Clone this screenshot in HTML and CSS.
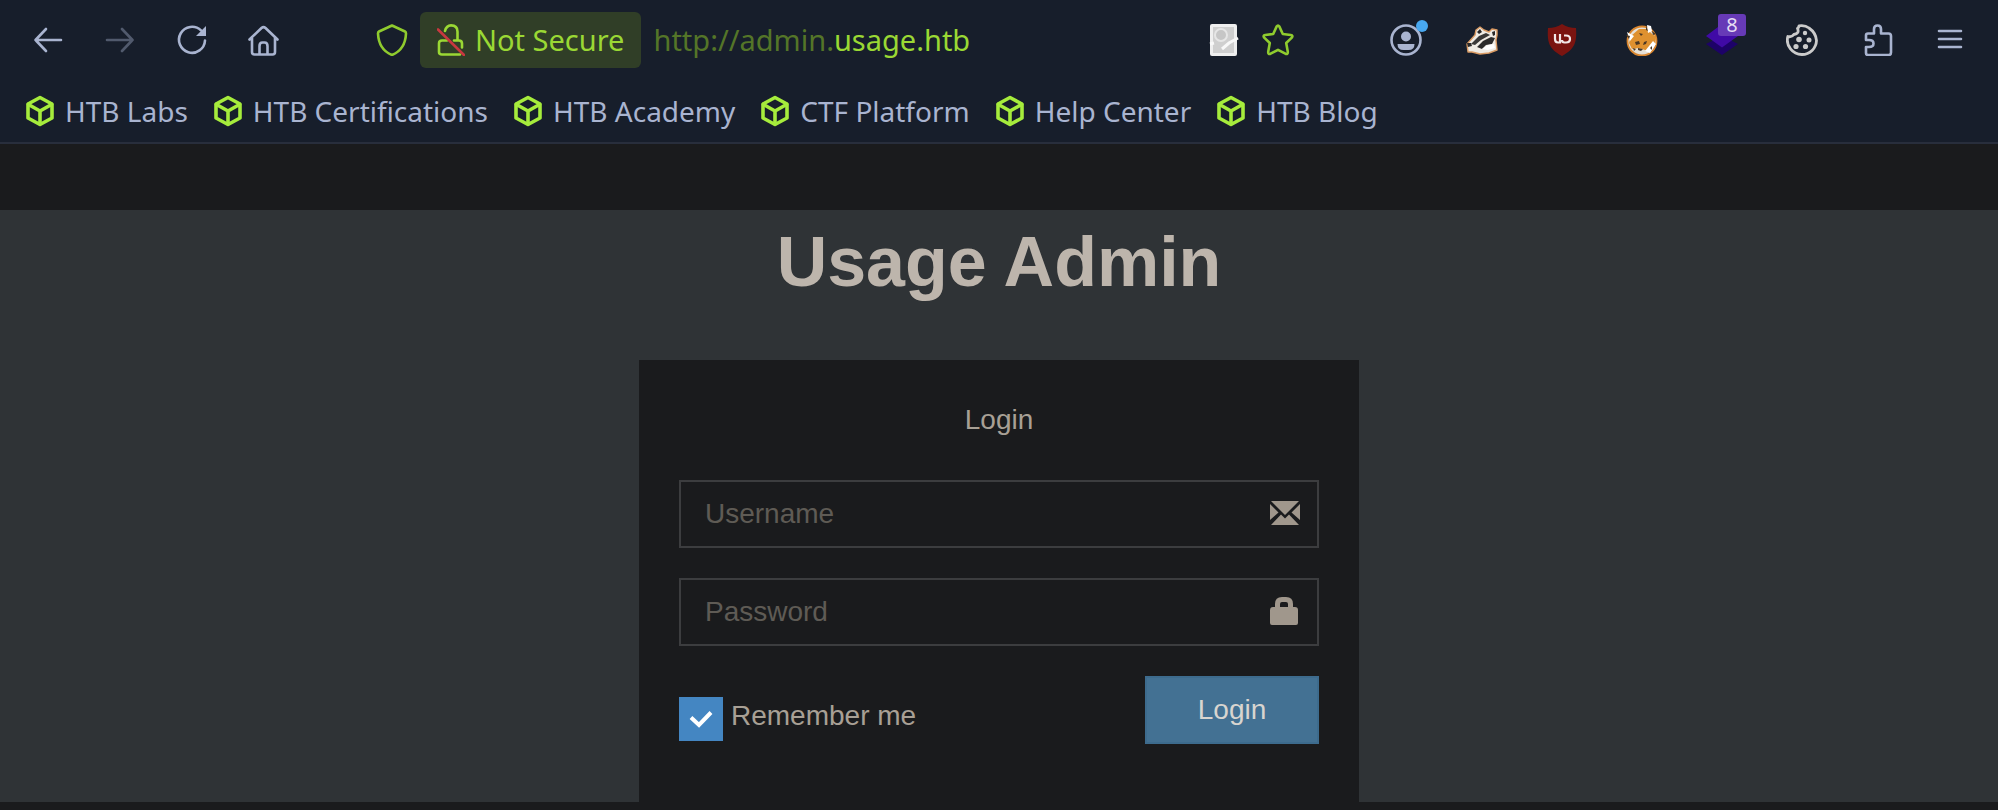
FILE: index.html
```html
<!DOCTYPE html>
<html lang="en">
<head>
<meta charset="utf-8">
<title>Usage Admin | Login</title>
<link rel="stylesheet" href="styles.css">
</head>
<body>
<svg class="defs" aria-hidden="true">
  <symbol id="cube" viewBox="0 0 32 32">
    <g fill="none" stroke="currentColor" stroke-width="3.6" stroke-linejoin="round" stroke-linecap="round">
      <path d="M16 2.500 28 9v14L16 29.500 4 23V9z"/>
      <path d="M4.500 9.500 16 16l11.500-6.500M16 16v13"/>
    </g>
  </symbol>
</svg>

<header class="browser">
  <div class="toolbar">
    <nav class="nav-buttons" aria-label="Navigation">
      <button class="icon-btn" aria-label="Back">
        <svg viewBox="0 0 32 32" class="line"><path d="M29 16H3.500M14 5 3.500 16 14 27"/></svg>
      </button>
      <button class="icon-btn faded" aria-label="Forward">
        <svg viewBox="0 0 32 32" class="line"><path d="M3 16h25.500M18 5 28.500 16 18 27"/></svg>
      </button>
      <button class="icon-btn" aria-label="Reload">
        <svg viewBox="0 0 32 32" class="line"><path d="M29 16.500A13 13 0 1 1 25 6.400"/><path d="M30 2v10H20z" fill="currentColor" stroke="none"/></svg>
      </button>
      <button class="icon-btn" aria-label="Home">
        <svg viewBox="0 0 32 32" class="line"><path d="M1.500 15.500 13.500 4q2-1.800 4 0l12 11.500M4 14v14q0 2.500 2.500 2.500h18q2.500 0 2.500-2.500V14M11.500 30v-8q0-3.500 3-3.500h2q3 0 3 3.500v8"/></svg>
      </button>
    </nav>

    <div class="urlbar">
      <button class="icon-btn green" aria-label="Tracking protection">
        <svg viewBox="0 0 32 32" class="line"><path d="M16 1.500 29 7.500q1 .500 1 2C29.500 20 26 27 16 31 6 27 2.500 20 2 9.500q0-1.500 1-2z"/></svg>
      </button>
      <button class="identity">
        <svg viewBox="0 0 28 32" class="line"><path d="M8 7C9 3 11 1.400 14 1.400q6.500 0 6.500 6.300v8.500M10 16.500H5q-3 0-3 3V28q0 2.500 3 2.500h18M17 16.500h5q3 0 3 3v4"/><path d="M1 5.500 27 31" stroke="#c8383f"/></svg>
        <span>Not Secure</span>
      </button>
      <div class="address" role="textbox" aria-label="Address">http://admin.<b>usage.htb</b></div>
      <div class="page-actions">
        <button class="icon-btn" aria-label="Reader image">
          <svg viewBox="0 0 32 32"><rect x="2" y="0" width="27" height="32" rx="2" fill="#efefef"/><rect x="5" y="3" width="21" height="26" fill="#cfcfcf"/><circle cx="13" cy="11" r="6" fill="#c6c6c6" stroke="#e6e6e6" stroke-width="2"/><path d="m14 25 7-6 9-5M2 20l4-1" fill="none" stroke="#f8f8f8" stroke-width="3"/></svg>
        </button>
        <button class="icon-btn green" aria-label="Bookmark this page">
          <svg viewBox="0 0 32 32" class="line"><path d="M14.600 2.600q1.400-2 2.800 0l3.400 7.400 8 1q2.600.500 1 2.600L24.200 19l1.600 8.800q.200 2.800-2.400 1.900L16 25.800l-7.400 3.900q-2.600.900-2.400-1.900L7.800 19l-5.600-5.400q-1.600-2.100 1-2.600l8-1z"/></svg>
        </button>
      </div>
    </div>

    <div class="extensions">
      <button class="icon-btn account" aria-label="Account">
        <svg viewBox="0 0 32 32"><circle cx="16" cy="16" r="14.500" fill="none" stroke="currentColor" stroke-width="2.600"/><circle cx="16" cy="12.500" r="5" fill="currentColor"/><path d="M7.500 20h17q0 6-6 6h-5q-6 0-6-6z" fill="currentColor"/></svg>
        <span class="dot"></span>
      </button>
      <div class="addons">
        <button class="icon-btn" aria-label="Privacy Badger">
          <svg viewBox="0 0 32 32"><path d="m1 20 8-9 1-5 4-3 4 3 5 2 3-3 5 1v5l-1 5 1 10-8 3-9 1-8-2-4 0z" fill="#efebe4" stroke="#d99a63" stroke-width="1.400" stroke-linejoin="round"/><path d="m5 20 8-8 7-3 4 2-9 5-6 5z" fill="#393837"/><path d="m11 23 6-6 8-4 4 1-3 6-6 1-4 4z" fill="#2c2b2b"/><path d="m16 25 6-4 6-1 1 4-7 2z" fill="#fff"/><path d="m11 8 3-3 2 3-3 2zM26 8l3-1v4l-2 1zM1 19l4 0 1 3-4 1z" fill="#292828"/></svg>
        </button>
        <button class="icon-btn" aria-label="uBlock Origin">
          <svg viewBox="0 0 32 32"><path d="M16 0q6 4 14 4c1 14-1 21-14 28C3 25 1 18 2 4q8 0 14-4z" fill="#7a1410"/><path d="M9 10v5q0 3.500 3 3.500h2V10M18 11.500h2q4 0 4 3.500t-4 3.500h-1.500q-2.500 0-2.500-2.500" fill="none" stroke="#f2e8e8" stroke-width="2.200"/></svg>
        </button>
        <button class="icon-btn" aria-label="FoxyProxy">
          <svg viewBox="0 0 32 32"><circle cx="16" cy="17" r="14.500" fill="#e6e0d6" stroke="#d9862f" stroke-width="1.800"/><path d="m5 12 8-7 8 0 4 4 5 4-1 6-7 8-9-3-7 1-3-6z" fill="#df912f"/><path d="m1 8 7 4-4 5zM21 1l4 1 1 5-4 2zM19 27l8-10 3 3-6 9z" fill="#fff"/><path d="m0 11 4 1-1 3zM20 1l2 6-2-1zM9 18l4-1 1 3-4 1zM18 18l3-1-1 3-3 1zM12 24l5 1-2 2-3-1zM7 24l3 1-2 2zM26 7l4 3-3 1zM13 9l4 1-2 2zM24 24l2-2v4z" fill="#4b3825"/></svg>
        </button>
        <button class="icon-btn" aria-label="Wappalyzer, 8 found">
          <svg viewBox="0 0 32 32"><path d="m0 20 16-8 16 8-16 11z" fill="#1d0268"/><path d="M0 12 16 0l16 12-16 11.500z" fill="#400aa6"/></svg>
          <span class="badge">8</span>
        </button>
        <button class="icon-btn" aria-label="Cookie Editor">
          <svg viewBox="0 0 32 32"><path d="M13 1.800q6-1 10 2.200 7 5 7.500 12.500A14.500 14.500 0 0 1 16 30.500 14.500 14.500 0 0 1 1.800 12.500q4 1 6-2 6-1 3.700-6 1.500-1 1.500-2.700z" fill="none" stroke="#cbcbcb" stroke-width="2.800" stroke-linejoin="round"/><g fill="#cbcbcb"><circle cx="19" cy="9" r="2.200"/><circle cx="13" cy="15.500" r="2.800"/><circle cx="23" cy="16" r="2.500"/><circle cx="10" cy="22.500" r="2.600"/><circle cx="19.500" cy="22.500" r="2.600"/></g></svg>
        </button>
      </div>
      <button class="icon-btn" aria-label="Extensions">
        <svg viewBox="0 0 32 32" class="line"><path d="M12 9.500V5q0-3.500 3.500-3.500T19 5v4.500h7.500q2.500 0 2.500 2.500V28.500q0 2.500-2.500 2.500H6q-2 0-2-2v-6h3q4.500 0 4.500-3.500T7 16H4v-4.500q0-2 2-2z"/></svg>
      </button>
      <button class="icon-btn menu" aria-label="Menu">
        <svg viewBox="0 0 32 32" class="line"><path d="M5 7h22M5 15h22M5 23h22"/></svg>
      </button>
    </div>
  </div>

  <nav class="bookmarks" aria-label="Bookmarks">
    <a href="#"><svg><use href="#cube"/></svg>HTB Labs</a>
    <a href="#"><svg><use href="#cube"/></svg>HTB Certifications</a>
    <a href="#"><svg><use href="#cube"/></svg>HTB Academy</a>
    <a href="#"><svg><use href="#cube"/></svg>CTF Platform</a>
    <a href="#"><svg><use href="#cube"/></svg>Help Center</a>
    <a href="#"><svg><use href="#cube"/></svg>HTB Blog</a>
  </nav>
</header>

<main class="page">
  <h1>Usage Admin</h1>
  <form class="card">
    <p class="card-title">Login</p>
    <div class="field">
      <input type="text" placeholder="Username" aria-label="Username">
      <svg viewBox="0 0 32 32"><path d="M2 4h28L16 18zM1 7l8.500 8.500L1 23zM31 7l-8.500 8.500L31 23zM2 28l10-10.500 4 4 4-4L30 28z"/></svg>
    </div>
    <div class="field">
      <input type="password" placeholder="Password" aria-label="Password">
      <svg viewBox="0 0 32 32"><path fill-rule="evenodd" d="M6 12V9q0-7 7-7h4q7 0 7 7v3h2q3 0 3 3v13q0 2-2 2H3q-2 0-2-2V15q0-3 3-3zm5 0h8V9q0-2-2-2h-4q-2 0-2 2z"/></svg>
    </div>
    <div class="actions">
      <label class="remember"><input type="checkbox" checked><span>Remember me</span></label>
      <button class="submit" type="button">Login</button>
    </div>
  </form>
</main>
</body>
</html>
```
FILE: styles.css
```css
* {
  box-sizing: border-box;
}

body {
  display: flex;
  flex-direction: column;
  min-height: 100vh;
  margin: 0;
  padding-bottom: 8px;
  background: #1a1b1d;
  color: #a8a095;
  font: 28px/40px "Liberation Sans", Arial, sans-serif;
}

button {
  margin: 0;
  padding: 0;
  border: 0;
  background: none;
  color: inherit;
  font: inherit;
}

svg {
  display: block;
}

.defs {
  position: absolute;
  width: 0;
  height: 0;
}

.browser {
  border-bottom: 2px solid #282e3c;
  background: #171e2b;
  color: #a9b4d0;
  font-family: "Noto Sans", sans-serif;
}

.toolbar {
  display: flex;
  align-items: center;
  height: 80px;
  padding: 0 32px;
  gap: 96px;
}

.nav-buttons {
  display: flex;
  gap: 40px;
}

.icon-btn {
  position: relative;
  flex: none;
  width: 32px;
  height: 32px;
}

.icon-btn svg {
  width: 32px;
  height: 32px;
}

.line {
  fill: none;
  stroke: currentColor;
  stroke-width: 2.6;
  stroke-linecap: round;
  stroke-linejoin: round;
}

.faded {
  opacity: 0.4;
}

.green {
  color: #8fcb2e;
}

.urlbar {
  display: flex;
  flex: 1;
  align-items: center;
  gap: 12px;
  font-size: 29px;
}

.identity {
  display: flex;
  align-items: center;
  gap: 10px;
  height: 56px;
  padding: 0 17px;
  border-radius: 6px;
  background: #303e27;
  color: #9ad834;
  white-space: nowrap;
}

.identity svg {
  width: 28px;
  height: 32px;
}

.address {
  flex: 1;
  color: #547528;
  white-space: nowrap;
}

.address b {
  color: #9ad834;
  font-weight: 400;
}

.page-actions {
  display: flex;
  gap: 22px;
}

.extensions {
  display: flex;
  gap: 44px;
}

.addons {
  display: flex;
  gap: 48px;
}

.menu {
  margin-left: -4px;
}

.dot {
  position: absolute;
  top: -4px;
  right: -6px;
  width: 12px;
  height: 12px;
  border-radius: 50%;
  background: #48a8f0;
}

.badge {
  position: absolute;
  top: -10px;
  right: -8px;
  width: 28px;
  height: 22px;
  border-radius: 3px;
  background: #673ab7;
  color: #e4dcf3;
  font-size: 20px;
  line-height: 22px;
}

.bookmarks {
  display: flex;
  gap: 24px;
  padding: 11px 24px;
}

.bookmarks a {
  display: flex;
  align-items: center;
  gap: 9px;
  color: inherit;
  text-decoration: none;
  white-space: nowrap;
}

.bookmarks svg {
  width: 32px;
  height: 32px;
  color: #a6ec3c;
}

.page {
  flex: 1;
  margin-top: 66px;
  padding-top: 2px;
  background: #2f3336;
}

h1 {
  margin: 0 0 48px;
  color: #bdb5ac;
  font-size: 70px;
  line-height: 100px;
  text-align: center;
}

.card {
  width: 720px;
  max-width: 100%;
  margin: 0 auto;
  padding: 40px 40px 58px;
  background: #1a1b1d;
}

.card-title {
  margin: 0 0 40px;
  text-align: center;
}

.field {
  position: relative;
  margin-bottom: 30px;
}

.field input {
  display: block;
  width: 100%;
  height: 68px;
  padding: 0 84px 0 24px;
  border: 2px solid #3c3d3f;
  border-radius: 0;
  background: transparent;
  color: inherit;
  font: inherit;
}

.field input::placeholder {
  color: #5f5b55;
  opacity: 1;
}

.field svg {
  position: absolute;
  top: 17px;
  right: 18px;
  width: 32px;
  height: 32px;
  fill: #a0978c;
}

.actions {
  display: flex;
  align-items: flex-start;
  justify-content: space-between;
}

.remember {
  display: flex;
  gap: 8px;
  padding-top: 20px;
}

.remember input {
  appearance: none;
  width: 44px;
  height: 44px;
  margin: 1px 0 0;
  background: #4486c2;
}

.remember input:checked {
  background: #4486c2 url("data:image/svg+xml,%3Csvg xmlns='http://www.w3.org/2000/svg' viewBox='0 0 44 44'%3E%3Cpath d='M12 20.500l8 7.500 12-12.500' fill='none' stroke='white' stroke-width='4'/%3E%3C/svg%3E") center / contain;
}

.submit {
  width: 174px;
  height: 68px;
  border: 2px solid #3d6b8d;
  background: #437193;
  color: #d8d5d0;
}
```
